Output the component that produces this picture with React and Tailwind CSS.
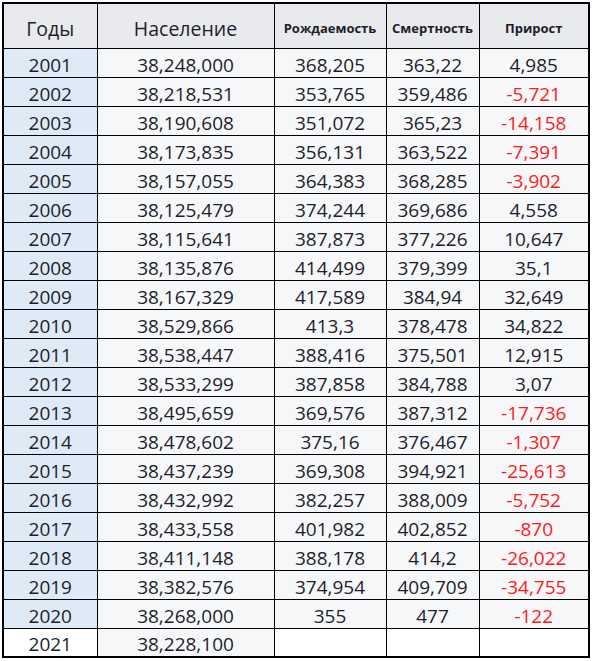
import React from "react";

const rows = [
  ["2001", "38,248,000", "368,205", "363,22", "4,985"],
  ["2002", "38,218,531", "353,765", "359,486", "-5,721"],
  ["2003", "38,190,608", "351,072", "365,23", "-14,158"],
  ["2004", "38,173,835", "356,131", "363,522", "-7,391"],
  ["2005", "38,157,055", "364,383", "368,285", "-3,902"],
  ["2006", "38,125,479", "374,244", "369,686", "4,558"],
  ["2007", "38,115,641", "387,873", "377,226", "10,647"],
  ["2008", "38,135,876", "414,499", "379,399", "35,1"],
  ["2009", "38,167,329", "417,589", "384,94", "32,649"],
  ["2010", "38,529,866", "413,3", "378,478", "34,822"],
  ["2011", "38,538,447", "388,416", "375,501", "12,915"],
  ["2012", "38,533,299", "387,858", "384,788", "3,07"],
  ["2013", "38,495,659", "369,576", "387,312", "-17,736"],
  ["2014", "38,478,602", "375,16", "376,467", "-1,307"],
  ["2015", "38,437,239", "369,308", "394,921", "-25,613"],
  ["2016", "38,432,992", "382,257", "388,009", "-5,752"],
  ["2017", "38,433,558", "401,982", "402,852", "-870"],
  ["2018", "38,411,148", "388,178", "414,2", "-26,022"],
  ["2019", "38,382,576", "374,954", "409,709", "-34,755"],
  ["2020", "38,268,000", "355", "477", "-122"],
];

export default function App() {
  return (
    <div className="w-[592px] h-[661px] bg-white pl-[2px] pt-[2px]" style={{ fontFamily: '"Open Sans", sans-serif' }}>
      <table className="table-fixed border-collapse border-2 border-black text-[19px] leading-none text-[#1e1e2a]">
        <colgroup>
          <col className="w-[94px]" />
          <col className="w-[177px]" />
          <col className="w-[112px]" />
          <col className="w-[93px]" />
          <col className="w-[110px]" />
        </colgroup>
        <thead>
          <tr className="h-[45px] bg-[#e9eaee]">
            <th className="border border-black font-normal text-[19.5px] text-center p-0 pt-[6px]">Годы</th>
            <th className="border border-black font-normal text-[19.5px] text-center p-0 pt-[6px]">Население</th>
            <th className="border border-black font-bold text-[13px] text-center p-0 pt-[5px]">Рождаемость</th>
            <th className="border border-black font-bold text-[13px] text-center p-0 pt-[5px]">Смертность</th>
            <th className="border border-black font-bold text-[13px] text-center p-0 pt-[5px]">Прирост</th>
          </tr>
        </thead>
        <tbody>
          {rows.map((r) => (
            <tr key={r[0]} className="h-[29px]">
              <td className="border border-black bg-[#deebf6] text-center p-0 pt-[5px]">{r[0]}</td>
              <td className="border border-black bg-[#f6f7f9] text-center p-0 pt-[5px]">{r[1]}</td>
              <td className="border border-black bg-[#f6f7f9] text-center p-0 pt-[5px]">{r[2]}</td>
              <td className="border border-black bg-[#f6f7f9] text-center p-0 pt-[5px]">{r[3]}</td>
              <td className={"border border-black bg-[#f6f7f9] text-center p-0 pt-[5px] " + (r[4].startsWith("-") ? "text-[#ff1a1a]" : "")}>{r[4]}</td>
            </tr>
          ))}
          <tr className="h-[29px] bg-white">
            <td className="border border-black text-center p-0 pt-[5px]">2021</td>
            <td className="border border-black bg-[#f6f7f9] text-center p-0 pt-[5px]">38,228,100</td>
            <td className="border border-black text-center p-0"></td>
            <td className="border border-black text-center p-0"></td>
            <td className="border border-black text-center p-0"></td>
          </tr>
        </tbody>
      </table>
    </div>
  );
}
